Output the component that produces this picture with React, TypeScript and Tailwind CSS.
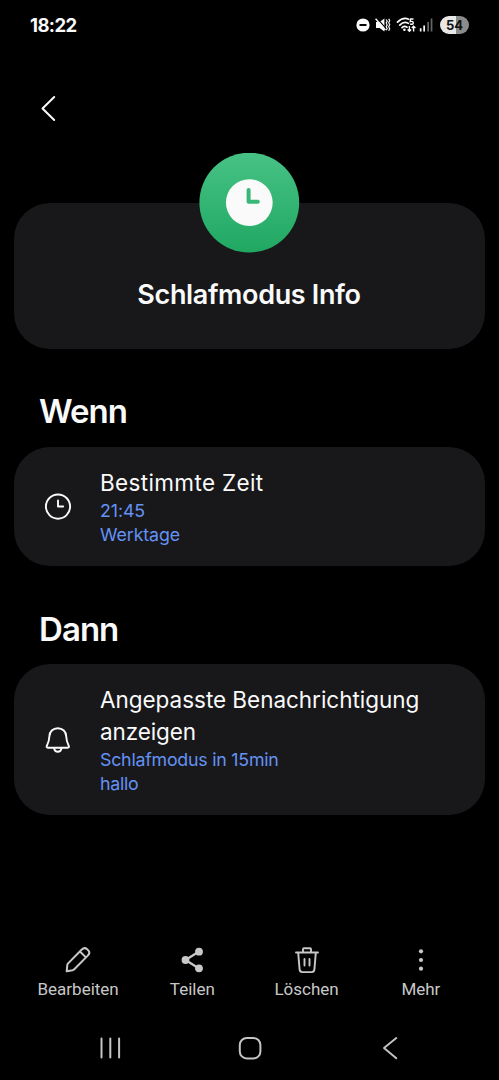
import type { ReactNode } from 'react';

export default function App() {
  return (
    <div className="w-[499px] h-[1080px] overflow-hidden bg-black text-[#fafafa] font-['Inter',sans-serif] flex flex-col">
      <StatusBar />

      {/* Header */}
      <header className="h-[102.5px] shrink-0 pt-[44px] pl-[36px]">
        <svg width="24" height="28" viewBox="0 0 24 28" fill="none" stroke="currentColor" strokeWidth="2" strokeLinecap="round" strokeLinejoin="round">
          <path d="M18.2 3 6.5 14.5 18.2 26" />
        </svg>
      </header>

      {/* Routine summary */}
      <section className="flex flex-col items-center mx-[14px] mt-[50px] h-[146px] shrink-0 rounded-[36px] bg-[#18181a]">
        <svg className="-mt-[50px] shrink-0" width="101" height="100" viewBox="0 0 101 100" fill="none">
          <defs>
            <linearGradient id="badge" x1="0" y1="0" x2="0" y2="1">
              <stop stopColor="#47c285" />
              <stop offset="1" stopColor="#20a862" />
            </linearGradient>
          </defs>
          <circle cx="50.3" cy="49.6" r="49.9" fill="url(#badge)" />
          <circle cx="50.3" cy="49.6" r="23.4" fill="#fafafa" />
          <path d="M49.6 37v11.8h9.2" stroke="#38b777" strokeWidth="4" strokeLinecap="round" strokeLinejoin="round" />
        </svg>
        <h1 className="mt-[24px] -ml-px whitespace-nowrap text-[27px] leading-[36px] font-semibold tracking-[-0.35px]">Schlafmodus Info</h1>
      </section>

      <h2 className="ml-[39px] mt-[42.5px] h-[55.5px] text-[33px] leading-[40px] font-semibold tracking-[-0.95px]">Wenn</h2>
      <ActionCard
        icon={<ClockIcon />}
        title={[{ text: 'Bestimmte Zeit', className: 'tracking-[0.35px]' }]}
        details={[
          { text: '21:45', className: 'tracking-[-0.1px]' },
          { text: 'Werktage', className: 'tracking-[-0.1px]' },
        ]}
      />

      <h2 className="ml-[39px] mt-[42.5px] h-[55px] text-[33px] leading-[40px] font-semibold tracking-[-0.95px]">Dann</h2>
      <ActionCard
        icon={<BellIcon />}
        title={[
          { text: 'Angepasste Benachrichtigung', className: 'tracking-[-0.03px]' },
          { text: 'anzeigen', className: 'tracking-[-0.1px]' },
        ]}
        details={[
          { text: 'Schlafmodus in 15min', className: 'tracking-[-0.23px]' },
          { text: 'hallo', className: 'tracking-[-0.3px]' },
        ]}
      />

      {/* Toolbar */}
      <nav className="mt-[130px] ml-[21px] grid w-[457px] grid-cols-4 font-['Roboto',sans-serif] text-[#c8c8c8]">
        {tools.map((tool) => (
          <div key={tool.label} className="flex flex-col items-center">
            {tool.icon}
            <span className="mt-[3px] whitespace-nowrap text-[17px] leading-[22px]">{tool.label}</span>
          </div>
        ))}
      </nav>

      {/* System navigation */}
      <div className="mt-[34px] ml-[40px] grid w-[420px] grid-cols-3 justify-items-center text-[#c4c4c4]">
        <svg width="28" height="28" viewBox="0 0 28 28" stroke="currentColor" strokeWidth="2" strokeLinecap="round">
          <path d="M5.5 4.5v19M14.3 4.5v19M23.1 4.5v19" />
        </svg>
        <svg width="28" height="28" viewBox="0 0 28 28" fill="none" stroke="currentColor" strokeWidth="2">
          <rect x="3.8" y="4" width="20.6" height="20.4" rx="7" />
        </svg>
        <svg width="28" height="28" viewBox="0 0 28 28" fill="none" stroke="currentColor" strokeWidth="1.9" strokeLinecap="round" strokeLinejoin="round">
          <path d="M20.3 4 8 14l12.3 10.3" />
        </svg>
      </div>
    </div>
  );
}

function StatusBar() {
  return (
    <div className="flex h-[50px] shrink-0 items-center pl-[30px] pr-[30px]">
      <span className="text-[18.5px] font-bold leading-none tracking-[-0.6px]">18:22</span>
      <div className="ml-auto flex items-center">
        <svg width="14" height="14" viewBox="0 0 14 14">
          <circle cx="7" cy="7" r="6.6" fill="#fafafa" />
          <path d="M3.5 7h7" stroke="#000" strokeWidth="2" />
        </svg>
        {/* Muted, vibrating */}
        <svg className="ml-[5px]" width="16" height="16" viewBox="0 0 16 16" fill="none" stroke="#fafafa">
          <path d="M1 5h3.6L9.4 1.4v13.2L4.6 11H1z" fill="#fafafa" stroke="none" />
          <path d="M1.6.9 11.8 12.4" stroke="#000" strokeWidth="1.2" />
          <path d="M.6 1.8 10.4 13" strokeWidth="1.4" />
          <path d="m11.2 2.5 1 1.8-1 1.8 1 1.8-1 1.8 1 1.8-1 1.8M13.7 1.8l1 2-1 2 1 2-1 2 1 2-1 2" strokeWidth="1.2" />
        </svg>
        {/* Wi-Fi */}
        <svg className="ml-[5px]" width="22" height="16" viewBox="0 0 22 16" fill="none" stroke="#fafafa">
          <path d="M1.5 5.2Q7-.2 12.6 2.2M3.8 8.1Q8 3.7 12.4 6.4M6 10.6q2.5-2.2 5-.4" strokeWidth="1.7" strokeLinecap="round" />
          <circle cx="8.4" cy="12.8" r="1.3" fill="#fafafa" stroke="none" />
          <path d="M17.5 2h-3l-.3 2.6c1.800-.6 3.200 0 3.100 1.300 0 1.400-1.700 1.800-3.200.9" strokeWidth="1.4" />
          <path d="M13.4 9v5M11.600 12.400l1.800 1.800 1.800-1.800M17.600 14.400v-5M15.800 11.100l1.800-1.800 1.800 1.800" strokeWidth="1.4" />
        </svg>
        <svg className="ml-[1px]" width="14" height="14" viewBox="0 0 14 14">
          <path d="M.8 10.3h1.7v3.2H.8zM4.3 7.5H6v6H4.3z" fill="#fafafa" />
          <path d="M8.3 4H10v9.5H8.3zM11.7.5h1.7v13h-1.7z" fill="#656565" />
        </svg>
        <div className="ml-[7px] flex h-[17.5px] w-[29px] items-center justify-center rounded-full bg-linear-to-r from-[#e8e8e8] from-54% to-[#8b8b8b] to-54%">
          <span className="text-[13px] font-bold leading-none text-[#111]">54</span>
        </div>
      </div>
    </div>
  );
}

type Line = { text: string; className: string };

function ActionCard({ icon, title, details }: { icon: ReactNode; title: Line[]; details: Line[] }) {
  return (
    <section className="mx-[14px] flex items-center rounded-[36px] bg-[#18181a] pt-[20px] pb-[19.5px] pl-[30px]">
      {icon}
      <div className="ml-[28px] whitespace-nowrap">
        {title.map((line) => (
          <p key={line.text} className={`text-[22.5px] leading-[32px] ${line.className}`}>{line.text}</p>
        ))}
        <div className="pt-[0.5px] -mb-[0.5px] text-[17.8px] leading-[24px] text-[#6492f5]">
          {details.map((line) => (
            <p key={line.text} className={line.className}>{line.text}</p>
          ))}
        </div>
      </div>
    </section>
  );
}

function ClockIcon() {
  return (
    <svg width="28" height="28" viewBox="0 0 28 28" fill="none" stroke="currentColor" strokeWidth="1.9" strokeLinecap="round" strokeLinejoin="round">
      <circle cx="14" cy="13.6" r="12.1" />
      <path d="M14 7.4v6.1h5.2" />
    </svg>
  );
}

function BellIcon() {
  return (
    <svg width="28" height="28" viewBox="0 0 28 28" fill="none" stroke="currentColor" strokeWidth="1.9" strokeLinecap="round" strokeLinejoin="round">
      <path d="M13.8 2.2c-5 0-8.200 3.500-8.400 8-.2 4.700-.8 6.300-2.500 9.500-.6 1.200-.3 2 1 2h19.800c1.300 0 1.600-.8 1-2-1.700-3.200-2.300-4.800-2.500-9.500-.2-4.500-3.400-8-8.400-8z" />
      <path d="M10 22c.5 2.500 1.900 3.800 3.800 3.800s3.300-1.300 3.800-3.800" />
    </svg>
  );
}

const tools = [
  {
    label: 'Bearbeiten',
    icon: (
      <svg width="30" height="30" viewBox="0 0 30 30" fill="none" stroke="currentColor" strokeWidth="2" strokeLinecap="round" strokeLinejoin="round">
        <path d="M3.7 26.300 4.300 20.200q.1-1 .8-1.800L18.800 4.500c1.700-1.600 3.700-1.700 5.300-.3l1.200 1.200c1.400 1.500 1.300 3.400-.3 5L11.300 24.300q-.8.800-1.800 1zM17.200 6.700l5.700 5.700" />
      </svg>
    ),
  },
  {
    label: 'Teilen',
    icon: (
      <svg width="30" height="30" viewBox="0 0 30 30" fill="currentColor">
        <path d="M22 6.500 8.500 15 22 23.500" fill="none" stroke="currentColor" strokeWidth="2.2" />
        <circle cx="22" cy="6.700" r="3.900" />
        <circle cx="8.500" cy="15" r="3.900" />
        <circle cx="22" cy="23.300" r="3.900" />
      </svg>
    ),
  },
  {
    label: 'Löschen',
    icon: (
      <svg width="30" height="30" viewBox="0 0 30 30" fill="none" stroke="currentColor" strokeWidth="1.9" strokeLinecap="round" strokeLinejoin="round">
        <path d="M4 7.500h22M11 7.200V4.200q0-1 1-1h6q1 0 1 1v3M6.200 7.800l1.400 16.600q.2 2.700 2.800 2.700h9.200q2.600 0 2.800-2.700L23.800 7.800M12.500 14v6.600M17.500 14v6.600" />
      </svg>
    ),
  },
  {
    label: 'Mehr',
    icon: (
      <svg width="30" height="30" viewBox="0 0 30 30" fill="currentColor">
        <circle cx="15" cy="6.300" r="2.100" />
        <circle cx="15" cy="15" r="2.100" />
        <circle cx="15" cy="23.700" r="2.100" />
      </svg>
    ),
  },
];
